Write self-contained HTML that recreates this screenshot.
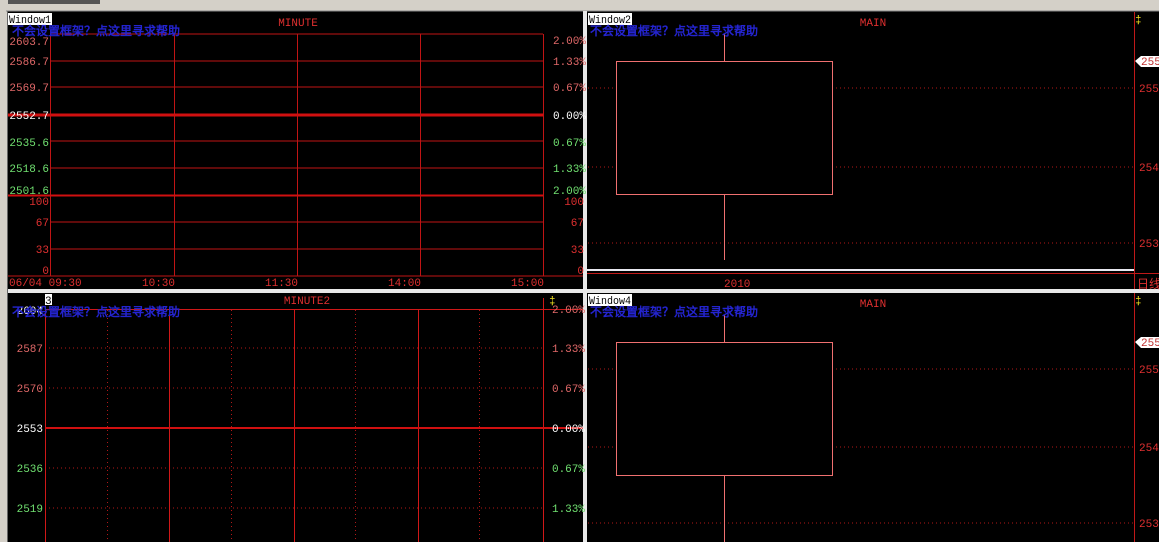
<!DOCTYPE html><html><head><meta charset="utf-8"><style>
html,body{margin:0;padding:0;background:#000;width:1159px;height:542px;overflow:hidden}
svg{display:block}
text{font-family:"Liberation Mono","WenQuanYi Zen Hei",monospace;font-size:11px}
.cj{font-family:"Liberation Sans","WenQuanYi Zen Hei",sans-serif;font-size:12px;fill:#2424d0;font-weight:bold}
.r{fill:#e06868}.w{fill:#fff}.g{fill:#70e070}.t{fill:#e03030}
</style></head><body>
<svg width="1159" height="542" viewBox="0 0 1159 542" xmlns="http://www.w3.org/2000/svg">
<rect x="0" y="0" width="1159" height="542" fill="#000"/>
<rect x="0" y="0" width="1159" height="11" fill="#d4d0c8"/>
<rect x="0" y="0" width="100" height="4" fill="#555"/>
<rect x="0" y="0" width="8" height="542" fill="#d4d0c8"/>
<line x1="6" y1="11" x2="1159" y2="11" fill="none" stroke="#888"/>
<rect x="583" y="11" width="4" height="531" fill="#e8e8e8"/>
<rect x="8" y="289" width="1151" height="4" fill="#e8e8e8"/>
<rect x="7" y="11" width="1" height="531" fill="#666"/>

<!-- Panel 1 -->
<g stroke="#c01414" stroke-width="1">
<line x1="50" y1="34" x2="543" y2="34"/><line x1="50" y1="61" x2="543" y2="61"/>
<line x1="50" y1="87" x2="543" y2="87"/><line x1="50" y1="141" x2="543" y2="141"/>
<line x1="50" y1="168" x2="543" y2="168"/><line x1="50" y1="222" x2="543" y2="222"/>
<line x1="50" y1="249" x2="543" y2="249"/><line x1="8" y1="276" x2="583" y2="276"/>
<line x1="50.5" y1="34" x2="50.5" y2="276"/><line x1="174.5" y1="34" x2="174.5" y2="276"/>
<line x1="297.5" y1="34" x2="297.5" y2="276"/><line x1="420.5" y1="34" x2="420.5" y2="276"/>
<line x1="543.5" y1="34" x2="543.5" y2="276"/>
</g>
<line x1="8" y1="115" x2="543" y2="115" stroke="#d01010" stroke-width="3"/>
<line x1="8" y1="195.5" x2="543" y2="195.5" stroke="#d01010" stroke-width="2"/>
<text x="298" y="26" class="t" text-anchor="middle" font-size="10">MINUTE</text>
<g text-anchor="end">
<text x="49" y="45" class="r">2603.7</text><text x="49" y="65" class="r">2586.7</text>
<text x="49" y="91" class="r">2569.7</text><text x="49" y="119" class="w">2552.7</text>
<text x="49" y="146" class="g">2535.6</text><text x="49" y="172" class="g">2518.6</text>
<text x="49" y="194" class="g">2501.6</text>
<text x="49" y="205" class="t">100</text><text x="49" y="226" class="t">67</text>
<text x="49" y="253" class="t">33</text><text x="49" y="274" class="t">0</text>
<text x="586" y="44" class="r">2.00%</text><text x="586" y="65" class="r">1.33%</text>
<text x="586" y="91" class="r">0.67%</text><text x="586" y="119" class="w">0.00%</text>
<text x="586" y="146" class="g">0.67%</text><text x="586" y="172" class="g">1.33%</text>
<text x="586" y="194" class="g">2.00%</text>
<text x="584" y="205" class="t">100</text><text x="584" y="226" class="t">67</text>
<text x="584" y="253" class="t">33</text><text x="584" y="274" class="t">0</text>
</g>
<g class="t"><text x="9" y="286">06/04 09:30</text><text x="142" y="286">10:30</text>
<text x="265" y="286">11:30</text><text x="388" y="286">14:00</text><text x="511" y="286">15:00</text></g>
<rect x="8" y="13" width="44" height="12" fill="#fff"/><text x="9" y="23" fill="#000" textLength="42" lengthAdjust="spacingAndGlyphs">Window1</text>
<text x="12" y="35" class="cj">不会设置框架？点这里寻求帮助</text>

<!-- Panel 2 -->
<g stroke="#b01818" stroke-dasharray="1,3">
<line x1="588" y1="88" x2="1133" y2="88"/><line x1="588" y1="167" x2="1133" y2="167"/><line x1="588" y1="243" x2="1133" y2="243"/>
</g>
<line x1="1134.5" y1="12" x2="1134.5" y2="289" stroke="#c01818"/>
<line x1="724.5" y1="34" x2="724.5" y2="260" stroke="#f07070"/>
<rect x="616.5" y="61.5" width="216" height="133" fill="#000" stroke="#f07070"/>
<line x1="587" y1="270" x2="1134" y2="270" stroke="#e8e8f0" stroke-width="2"/>
<line x1="587" y1="273.5" x2="1159" y2="273.5" stroke="#c01818"/>
<text x="873" y="26" class="t" text-anchor="middle" font-size="10">MAIN</text>
<path d="M1135 61 L1141 56 H1159 V67 H1141 Z" fill="#fff"/>
<text x="1141" y="65" fill="#c03030">2554</text>
<text x="1139" y="92" class="t">2550</text><text x="1139" y="171" class="t">2540</text><text x="1139" y="247" class="t">2530</text>
<text x="724" y="287" class="t">2010</text>
<text x="1137" y="288" class="t" style="font-family:'WenQuanYi Zen Hei',sans-serif;font-size:12px">日线</text>
<text x="1135" y="23" fill="#f0e020" font-size="10">‡</text>
<rect x="588" y="13" width="44" height="12" fill="#fff"/><text x="589" y="23" fill="#000" textLength="42" lengthAdjust="spacingAndGlyphs">Window2</text>
<text x="590" y="35" class="cj">不会设置框架？点这里寻求帮助</text>

<!-- Panel 3 -->
<g stroke="#b01818" stroke-dasharray="1,3">
<line x1="45" y1="348" x2="543" y2="348"/><line x1="45" y1="388" x2="543" y2="388"/>
<line x1="45" y1="468" x2="543" y2="468"/><line x1="45" y1="508" x2="543" y2="508"/>
<line x1="107.5" y1="310" x2="107.5" y2="542"/><line x1="231.5" y1="310" x2="231.5" y2="542"/>
<line x1="355.5" y1="310" x2="355.5" y2="542"/><line x1="479.5" y1="310" x2="479.5" y2="542"/>
</g>
<g stroke="#d01818">
<line x1="45" y1="309.5" x2="583" y2="309.5"/>
<line x1="45.5" y1="309" x2="45.5" y2="542"/><line x1="169.5" y1="309" x2="169.5" y2="542"/>
<line x1="294.5" y1="309" x2="294.5" y2="542"/><line x1="418.5" y1="309" x2="418.5" y2="542"/>
<line x1="543.5" y1="298" x2="543.5" y2="542"/>
</g>
<line x1="45" y1="428" x2="583" y2="428" stroke="#d01010" stroke-width="2"/>
<text x="307" y="304" class="t" text-anchor="middle" font-size="10">MINUTE2</text>
<g text-anchor="end">
<text x="43" y="314" class="w">2604</text><text x="43" y="352" class="r">2587</text>
<text x="43" y="392" class="r">2570</text><text x="43" y="432" class="w">2553</text>
<text x="43" y="472" class="g">2536</text><text x="43" y="512" class="g">2519</text>
<text x="585" y="313" class="r">2.00%</text><text x="585" y="352" class="r">1.33%</text>
<text x="585" y="392" class="r">0.67%</text><text x="585" y="432" class="w">0.00%</text>
<text x="585" y="472" class="g">0.67%</text><text x="585" y="512" class="g">1.33%</text>
</g>
<text x="549" y="304" fill="#f0e020" font-size="10">‡</text>
<rect x="45" y="294" width="7" height="11" fill="#fff"/><text x="45" y="304" fill="#000">3</text>
<text x="12" y="316" class="cj">不会设置框架？点这里寻求帮助</text>

<!-- Panel 4 -->
<g stroke="#b01818" stroke-dasharray="1,3">
<line x1="588" y1="369" x2="1133" y2="369"/><line x1="588" y1="447" x2="1133" y2="447"/><line x1="588" y1="523" x2="1133" y2="523"/>
</g>
<line x1="1134.5" y1="293" x2="1134.5" y2="542" stroke="#c01818"/>
<line x1="724.5" y1="315" x2="724.5" y2="542" stroke="#f07070"/>
<rect x="616.5" y="342.5" width="216" height="133" fill="#000" stroke="#f07070"/>
<text x="873" y="307" class="t" text-anchor="middle" font-size="10">MAIN</text>
<path d="M1135 342 L1141 337 H1159 V348 H1141 Z" fill="#fff"/>
<text x="1141" y="346" fill="#c03030">2554</text>
<text x="1139" y="373" class="t">2550</text><text x="1139" y="451" class="t">2540</text><text x="1139" y="527" class="t">2530</text>
<text x="1135" y="304" fill="#f0e020" font-size="10">‡</text>
<rect x="588" y="294" width="44" height="12" fill="#fff"/><text x="589" y="304" fill="#000" textLength="42" lengthAdjust="spacingAndGlyphs">Window4</text>
<text x="590" y="316" class="cj">不会设置框架？点这里寻求帮助</text>
</svg>
</body></html>
